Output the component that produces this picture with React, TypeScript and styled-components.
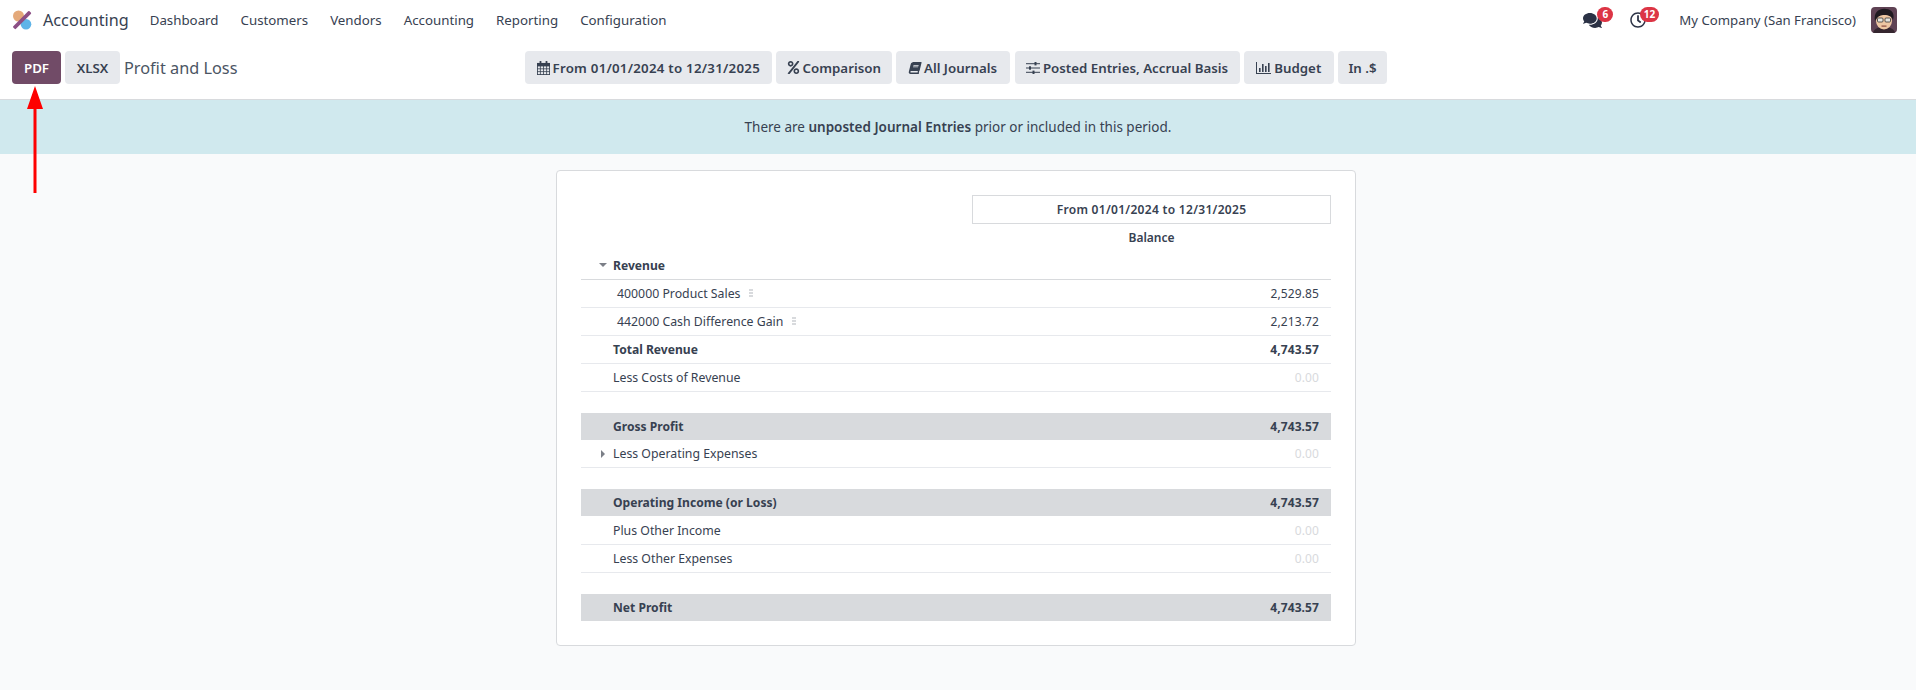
import React from "react";
import styled, { createGlobalStyle } from "styled-components";
import { FaPercent, FaBook, FaComments, FaRegClock } from "react-icons/fa";

const GlobalStyle = createGlobalStyle`
  html, body {
    margin: 0;
    padding: 0;
    background: #f9fafb;
    color: #374151;
    font-family: "Noto Sans", "Open Sans", sans-serif;
    font-size: 13px;
  }
`;

const navItems = ["Dashboard", "Customers", "Vendors", "Accounting", "Reporting", "Configuration"];

function App() {
  return (
    <Page>
      <GlobalStyle />
      <Navbar>
        <Logo />
        <Brand>Accounting</Brand>
        <NavMenu>
          {navItems.map((n) => (
            <NavItem key={n}>{n}</NavItem>
          ))}
        </NavMenu>
        <Systray>
          <TrayIcon $gap={28}>
            <FaComments size={19} />
            <Badge $top={-4} $left={14}>6</Badge>
          </TrayIcon>
          <TrayIcon $gap={33}>
            <FaRegClock size={16} />
            <Badge $top={-5} $left={10}>12</Badge>
          </TrayIcon>
          <Company>My Company (San Francisco)</Company>
          <Avatar />
        </Systray>
      </Navbar>

      <ControlPanel>
        <LeftTools>
          <Button $primary $width={49}>PDF</Button>
          <Button $width={55}>XLSX</Button>
          <Title>Profit and Loss</Title>
        </LeftTools>
        <Filters>
          <Button $width={246.5}><CalendarIcon /><DateText>From 01/01/2024 to 12/31/2025</DateText></Button>
          <Button $width={115.5}><FaPercent size={13} />Comparison</Button>
          <Button $width={114}><BookIcon size={12} />All Journals</Button>
          <Button $width={225}><SlidersIcon />Posted Entries, Accrual Basis</Button>
          <Button $width={89.5}><BarChart />Budget</Button>
          <Button $width={49}>In .$</Button>
        </Filters>
      </ControlPanel>

      <Banner>
        There are&nbsp;<strong>unposted Journal Entries</strong>&nbsp;prior or included in this period.
      </Banner>

      <Content>
        <Card>
          <HeaderBlock>
            <PeriodBox>From 01/01/2024 to 12/31/2025</PeriodBox>
            <BalanceLabel>Balance</BalanceLabel>
          </HeaderBlock>

          <Row $kind="head" $height={29}>
            <Label $bold><Caret $open />Revenue</Label>
          </Row>
          <Row $height={28}>
            <Label $indent>400000 Product Sales<Dots /></Label>
            <Amount>2,529.85</Amount>
          </Row>
          <Row $height={28}>
            <Label $indent>442000 Cash Difference Gain<Dots /></Label>
            <Amount>2,213.72</Amount>
          </Row>
          <Row $height={28}>
            <Label $bold>Total Revenue</Label>
            <Amount $bold>4,743.57</Amount>
          </Row>
          <Row $height={28}>
            <Label>Less Costs of Revenue</Label>
            <Amount $muted>0.00</Amount>
          </Row>
          <Spacer />
          <Row $kind="band" $height={27}>
            <Label $bold>Gross Profit</Label>
            <Amount $bold>4,743.57</Amount>
          </Row>
          <Row $height={28}>
            <Label><Caret />Less Operating Expenses</Label>
            <Amount $muted>0.00</Amount>
          </Row>
          <Spacer />
          <Row $kind="band" $height={27}>
            <Label $bold>Operating Income (or Loss)</Label>
            <Amount $bold>4,743.57</Amount>
          </Row>
          <Row $height={29}>
            <Label>Plus Other Income</Label>
            <Amount $muted>0.00</Amount>
          </Row>
          <Row $height={28}>
            <Label>Less Other Expenses</Label>
            <Amount $muted>0.00</Amount>
          </Row>
          <Spacer />
          <Row $kind="band" $height={27}>
            <Label $bold>Net Profit</Label>
            <Amount $bold>4,743.57</Amount>
          </Row>
        </Card>
      </Content>

      <PointerArrow viewBox="0 0 16 107">
        <polygon points="8,0 16,23 9.5,23 9.5,107 6.5,107 6.5,23 0,23" fill="#fe0000" />
      </PointerArrow>
    </Page>
  );
}

export default App;

// small drawings
const Logo = () => (
  <LogoSvg viewBox="0 0 20 20">
    <circle cx="6.5" cy="6" r="5.5" fill="#e4a97a" />
    <circle cx="14" cy="14.2" r="5.3" fill="#5fb4e8" />
    <rect x="-1.5" y="8.2" width="23" height="3.8" rx="1" fill="#8c4f85" transform="rotate(-45 10 10)" />
  </LogoSvg>
);

const CalendarIcon = () => (
  <svg width="13" height="14" viewBox="0 0 13 14" fill="#374151">
    <rect x="0" y="2" width="13" height="3.4" />
    <rect x="0.4" y="2.4" width="12.2" height="11.2" fill="none" stroke="#374151" strokeWidth="0.9" />
    <rect x="2.6" y="0" width="1.8" height="3.6" rx="0.6" />
    <rect x="8.6" y="0" width="1.8" height="3.6" rx="0.6" />
    <path d="M0 7.8H13M0 10.6H13M3.4 5V14M6.5 5V14M9.6 5V14" stroke="#374151" strokeWidth="0.8" fill="none" />
  </svg>
);

const SlidersIcon = () => (
  <svg width="14" height="12" viewBox="0 0 14 12" fill="#374151">
    <rect x="0" y="1.2" width="14" height="1" />
    <rect x="0" y="5.5" width="14" height="1" />
    <rect x="0" y="9.8" width="14" height="1" />
    <rect x="8.5" y="0" width="2" height="3.4" />
    <rect x="3" y="4.3" width="2" height="3.4" />
    <rect x="6.5" y="8.6" width="2" height="3.4" />
  </svg>
);

const BarChart = () => (
  <svg width="15" height="12" viewBox="0 0 15 12" fill="#374151">
    <rect x="0" y="0" width="1" height="12" />
    <rect x="0" y="11" width="15" height="1" />
    <rect x="3" y="6" width="1.6" height="4" />
    <rect x="6" y="2" width="1.6" height="8" />
    <rect x="9" y="4" width="1.6" height="6" />
    <rect x="12" y="1" width="1.6" height="9" />
  </svg>
);

const Avatar = () => (
  <AvatarSvg viewBox="0 0 26 26">
    <rect width="26" height="26" fill="#5f4254" />
    <path d="M2 26 C3 21 8 20 13 20 C18 20 23 21 24 26 Z" fill="#35262f" />
    <ellipse cx="13" cy="14" rx="8" ry="8.5" fill="#eec7a3" />
    <path d="M4 14 C2 4 10 1 15 2 C21 2 24 7 22 13 C20 8 16 8 12 8 C9 8 6 10 4 14 Z" fill="#1f1a20" />
    <rect x="6.5" y="11" width="5.5" height="4" rx="1" fill="#e6e4de" stroke="#333" strokeWidth="0.8" />
    <rect x="14" y="11" width="5.5" height="4" rx="1" fill="#e6e4de" stroke="#333" strokeWidth="0.8" />
    <rect x="10.5" y="18.5" width="5" height="1.2" fill="#8a4a3c" />
  </AvatarSvg>
);

const Page = styled.div`
  position: relative;
  min-height: 690px;
  background: #f9fafb;
`;

// navbar
const Navbar = styled.header`
  display: flex;
  align-items: center;
  height: 40px;
  padding: 0 19px 0 12px;
  background: #fff;
`;

const LogoSvg = styled.svg`
  width: 20px;
  height: 20px;
  margin-right: 11px;
`;

const Brand = styled.div`
  font-size: 16.2px;
  margin-right: 21px;
`;

const NavMenu = styled.nav`
  display: flex;
  gap: 22px;
`;

const NavItem = styled.div`
  font-size: 13.3px;
`;

const Systray = styled.div`
  display: flex;
  align-items: center;
  margin-left: auto;
`;

const TrayIcon = styled.div<{ $gap: number }>`
  position: relative;
  display: flex;
  align-items: center;
  margin-right: ${(p) => p.$gap}px;
  color: #2b3245;
`;

const Badge = styled.span<{ $top: number; $left: number }>`
  position: absolute;
  top: ${(p) => p.$top}px;
  left: ${(p) => p.$left}px;
  min-width: 16px;
  height: 15px;
  padding: 0 3.5px;
  box-sizing: border-box;
  border-radius: 8px;
  background: #dc3545;
  color: #fff;
  font-size: 10px;
  font-weight: 700;
  line-height: 15px;
  text-align: center;
`;

const Company = styled.div`
  font-size: 13.2px;
  margin-right: 15px;
`;

const AvatarSvg = styled.svg`
  width: 26px;
  height: 26px;
  border-radius: 4px;
`;

// control panel
const ControlPanel = styled.div`
  display: grid;
  grid-template-columns: 1fr auto 1fr;
  align-items: start;
  height: 60px;
  padding: 11px 16px 0 12px;
  box-sizing: border-box;
  background: #fff;
  border-bottom: 1px solid #d8dadd;
`;

const LeftTools = styled.div`
  display: flex;
  align-items: center;
  gap: 4px;
`;

const Filters = styled.div`
  display: flex;
  gap: 4.5px;
`;

const Button = styled.button<{ $primary?: boolean; $width: number }>`
  display: inline-flex;
  align-items: center;
  justify-content: center;
  gap: 3px;
  height: 33px;
  width: ${(p) => p.$width}px;
  padding: 0;
  border: 0;
  border-radius: 4px;
  font-family: inherit;
  font-size: 13.3px;
  font-weight: 600;
  background: ${(p) => (p.$primary ? "#714b67" : "#e7e9ed")};
  color: ${(p) => (p.$primary ? "#fff" : "#374151")};
`;

const DateText = styled.span`
  letter-spacing: 0.24px;
`;

const BookIcon = styled(FaBook)`
  transform: skewX(-14deg);
`;

const Title = styled.div`
  font-size: 16.3px;
  color: #4b5563;
`;

// banner
const Banner = styled.div`
  display: flex;
  justify-content: center;
  align-items: center;
  height: 54px;
  background: #d0e9ee;
  color: #374151;
  font-size: 13.5px;

  strong {
    font-weight: 600;
  }
`;

// report
const Content = styled.main`
  display: flex;
  justify-content: center;
  padding: 16px 4px 0 0;
`;

const Card = styled.section`
  width: 800px;
  box-sizing: border-box;
  padding: 24px;
  background: #fff;
  border: 1px solid #d8dadd;
  border-radius: 4px;
`;

const HeaderBlock = styled.div`
  display: flex;
  flex-direction: column;
  align-items: flex-end;
`;

const PeriodBox = styled.div`
  width: 359px;
  height: 29px;
  box-sizing: border-box;
  border: 1px solid #d8dadd;
  font-size: 12px;
  font-weight: 600;
  letter-spacing: 0.3px;
  line-height: 27px;
  text-align: center;
`;

const BalanceLabel = styled.div`
  width: 359px;
  height: 27px;
  font-size: 12px;
  font-weight: 600;
  line-height: 27px;
  text-align: center;
`;

const Row = styled.div<{ $kind?: "head" | "band"; $height: number }>`
  display: flex;
  align-items: center;
  justify-content: space-between;
  height: ${(p) => p.$height}px;
  box-sizing: border-box;
  padding: 0 12px 0 32px;
  background: ${(p) => (p.$kind === "band" ? "#d8dadd" : "transparent")};
  border-bottom: ${(p) =>
    p.$kind === "band" ? "0" : p.$kind === "head" ? "1px solid #d8dadd" : "1px solid #e7e9ed"};
`;

const Spacer = styled.div`
  height: 21px;
`;

const Label = styled.div<{ $bold?: boolean; $indent?: boolean }>`
  position: relative;
  display: flex;
  align-items: center;
  margin-left: ${(p) => (p.$indent ? "4px" : "0")};
  font-size: ${(p) => (p.$bold ? "12.1px" : "12.3px")};
  font-weight: ${(p) => (p.$bold ? 700 : 400)};
`;

const Amount = styled.div<{ $bold?: boolean; $muted?: boolean }>`
  font-size: 12px;
  letter-spacing: 0.1px;
  font-weight: ${(p) => (p.$bold ? 700 : 400)};
  color: ${(p) => (p.$muted ? "#d8dadd" : "#374151")};
`;

const Caret = styled.span<{ $open?: boolean }>`
  position: absolute;
  left: ${(p) => (p.$open ? "-14px" : "-12px")};
  top: 50%;
  width: 0;
  height: 0;
  ${(p) =>
    p.$open
      ? `
    margin-top: -2px;
    border-left: 4px solid transparent;
    border-right: 4px solid transparent;
    border-top: 4px solid #7b7f87;
  `
      : `
    margin-top: -4px;
    border-top: 4px solid transparent;
    border-bottom: 4px solid transparent;
    border-left: 4px solid #7b7f87;
  `}
`;

const Dots = styled.span`
  width: 4px;
  height: 9px;
  margin-left: 9px;
  background: repeating-linear-gradient(to bottom, #d8dadd 0 2px, transparent 2px 3px);
`;

// the red annotation arrow lying over the page
const PointerArrow = styled.svg`
  position: absolute;
  left: 27px;
  top: 86px;
  width: 16px;
  height: 107px;
`;
